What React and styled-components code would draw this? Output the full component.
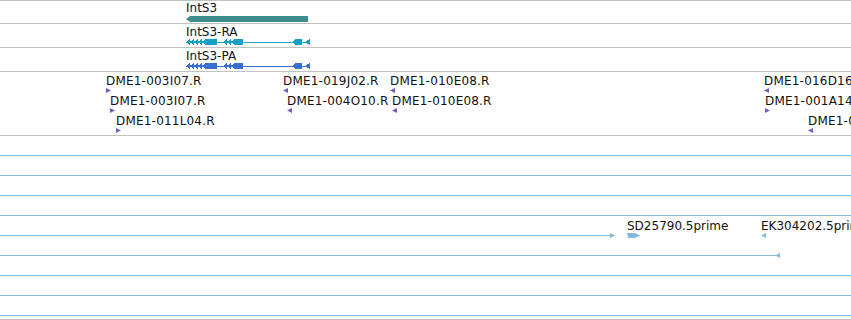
import React from "react";
import styled, { createGlobalStyle } from "styled-components";

const GRAY = "#c2c2c2";
const EST_BLUE = "#86b9e0";
const PURPLE = "#7b58c0";

const GlobalStyle = createGlobalStyle`
  html, body { margin: 0; padding: 0; background: #ffffff; }
  body {
    font-family: "DejaVu Sans", "Noto Sans", sans-serif;
    overflow: hidden;
  }
`;

const Browser = styled.div`
  width: 851px;
  height: 320px;
  box-sizing: border-box;
  overflow: hidden;
  display: flex;
  flex-direction: column;
  border-top: 1px solid ${GRAY};
  background: #fff;
`;

const Track = styled.div`
  position: relative;
  flex: none;
  height: ${(p) => p.$h}px;
  border-bottom: 1px solid ${GRAY};
  overflow: hidden;
`;

const RowStack = styled.div`
  display: flex;
  flex-direction: column;
`;

const EstRow = styled.div`
  position: relative;
  height: 20px;
  display: flex;
  flex-direction: column;
  justify-content: flex-end;
`;

const FeatureLine = styled.div`
  height: 1px;
  width: ${(p) => (p.$w ? `${p.$w}px` : "100%")};
  background: ${EST_BLUE};
`;

const Feature = styled.div`
  position: absolute;
  left: ${(p) => p.$x}px;
  top: ${(p) => p.$y}px;
  display: flex;
  flex-direction: column;
  align-items: flex-start;
  gap: ${(p) => p.$gap || 0}px;
  white-space: nowrap;
`;

const Label = styled.span`
  display: block;
  font-size: 12px;
  line-height: 14px;
  letter-spacing: ${(p) => p.$spacing || 0}px;
  color: #111;
  white-space: nowrap;
`;

const Glyph = styled.svg`
  display: block;
  flex: none;
  overflow: visible;
`;

const Marker = styled.svg`
  position: absolute;
  left: ${(p) => p.$x}px;
  top: ${(p) => p.$y}px;
  display: block;
  overflow: visible;
`;

function Triangle({ dir, color }) {
  const pts = dir === "right" ? "0,0 5,2.5 0,5" : "5,0 0,2.5 5,5";
  return (
    <Glyph width="5" height="5" viewBox="0 0 5 5">
      <polygon points={pts} fill={color} />
    </Glyph>
  );
}

function GeneBar() {
  return (
    <Glyph width="122" height="6" viewBox="0 0 122 6">
      <polygon points="0,3 4,0 122,0 122,6 4,6" fill="#3d8e8e" />
    </Glyph>
  );
}

function Chevrons({ from, count, step, color }) {
  const items = [];
  for (let i = 0; i < count; i++) {
    const x = from + i * step;
    items.push(
      <polygon key={i} points={`${x},3 ${x + 4},0 ${x + 4},6`} fill={color} />
    );
  }
  return (
    <g>
      <rect x={from + 1} y="2" width={count * step} height="2" fill={color} />
      {items}
    </g>
  );
}

function Transcript({ color }) {
  return (
    <Glyph width="125" height="6" viewBox="0 0 125 6" shapeRendering="crispEdges">
      <rect x="0" y="3" width="124" height="1" fill={color} />
      <Chevrons from={0} count={5} step={4} color={color} />
      <rect x="19" y="0" width="12" height="6" fill={color} />
      <Chevrons from={37} count={3} step={4} color={color} />
      <rect x="48" y="0" width="9" height="6" fill={color} />
      <polygon points="106,3 110,0 116,0 116,6 110,6" fill={color} />
      <polygon points="119,3 124,0 124,6" fill={color} />
    </Glyph>
  );
}

const dmeRows = [
  [
    { x: 106, label: "DME1-003I07.R", dir: "right" },
    { x: 283, label: "DME1-019J02.R", dir: "left" },
    { x: 390, label: "DME1-010E08.R", dir: "left" },
    { x: 764, label: "DME1-016D16.R", dir: "left" },
  ],
  [
    { x: 110, label: "DME1-003I07.R", dir: "right" },
    { x: 287, label: "DME1-004O10.R", dir: "left" },
    { x: 392, label: "DME1-010E08.R", dir: "left" },
    { x: 765, label: "DME1-001A14.R", dir: "right" },
  ],
  [
    { x: 116, label: "DME1-011L04.R", dir: "right" },
    { x: 808, label: "DME1-009K11.R", dir: "left" },
  ],
];

const estRows = [
  {},
  {},
  {},
  {},
  {
    line: 611,
    content: (
      <>
        <Marker $x={610} $y={17} width="5" height="5" viewBox="0 0 5 5">
          <polygon points="0,0 5,2.5 0,5" fill={EST_BLUE} />
        </Marker>
        <Feature $x={627} $y={3}>
          <Label>SD25790.5prime</Label>
          <Glyph width="13" height="5" viewBox="0 0 13 5">
            <polygon points="0,0 8,0 13,2.5 8,5 1,5" fill={EST_BLUE} />
          </Glyph>
        </Feature>
        <Feature $x={761} $y={3}>
          <Label>EK304202.5prime</Label>
          <Triangle dir="left" color={EST_BLUE} />
        </Feature>
      </>
    ),
  },
  {
    line: 776,
    content: (
      <Marker $x={775} $y={17} width="5" height="5" viewBox="0 0 5 5">
        <polygon points="5,0 0,2.5 5,5" fill={EST_BLUE} />
      </Marker>
    ),
  },
  {},
  {},
  {},
];

export default function App() {
  return (
    <>
      <GlobalStyle />
      <Browser>
        <Track $h={22}>
          <Feature $x={186} $y={0} $gap={1}>
            <Label>IntS3</Label>
            <GeneBar />
          </Feature>
        </Track>
        <Track $h={23}>
          <Feature $x={186} $y={1}>
            <Label>IntS3-RA</Label>
            <Transcript color="#18a1c4" />
          </Feature>
        </Track>
        <Track $h={23}>
          <Feature $x={186} $y={1}>
            <Label>IntS3-PA</Label>
            <Transcript color="#3a6fd2" />
          </Feature>
        </Track>
        <Track $h={63}>
          {dmeRows.map((row, r) =>
            row.map((f, i) => (
              <Feature key={`${r}-${i}`} $x={f.x} $y={2 + r * 20}>
                <Label $spacing={0.2}>{f.label}</Label>
                <Triangle dir={f.dir} color={PURPLE} />
              </Feature>
            ))
          )}
        </Track>
        <Track $h={183}>
          <RowStack>
            {estRows.map((row, i) => (
              <EstRow key={i}>
                {row.content}
                <FeatureLine $w={row.line} />
              </EstRow>
            ))}
          </RowStack>
        </Track>
      </Browser>
    </>
  );
}
